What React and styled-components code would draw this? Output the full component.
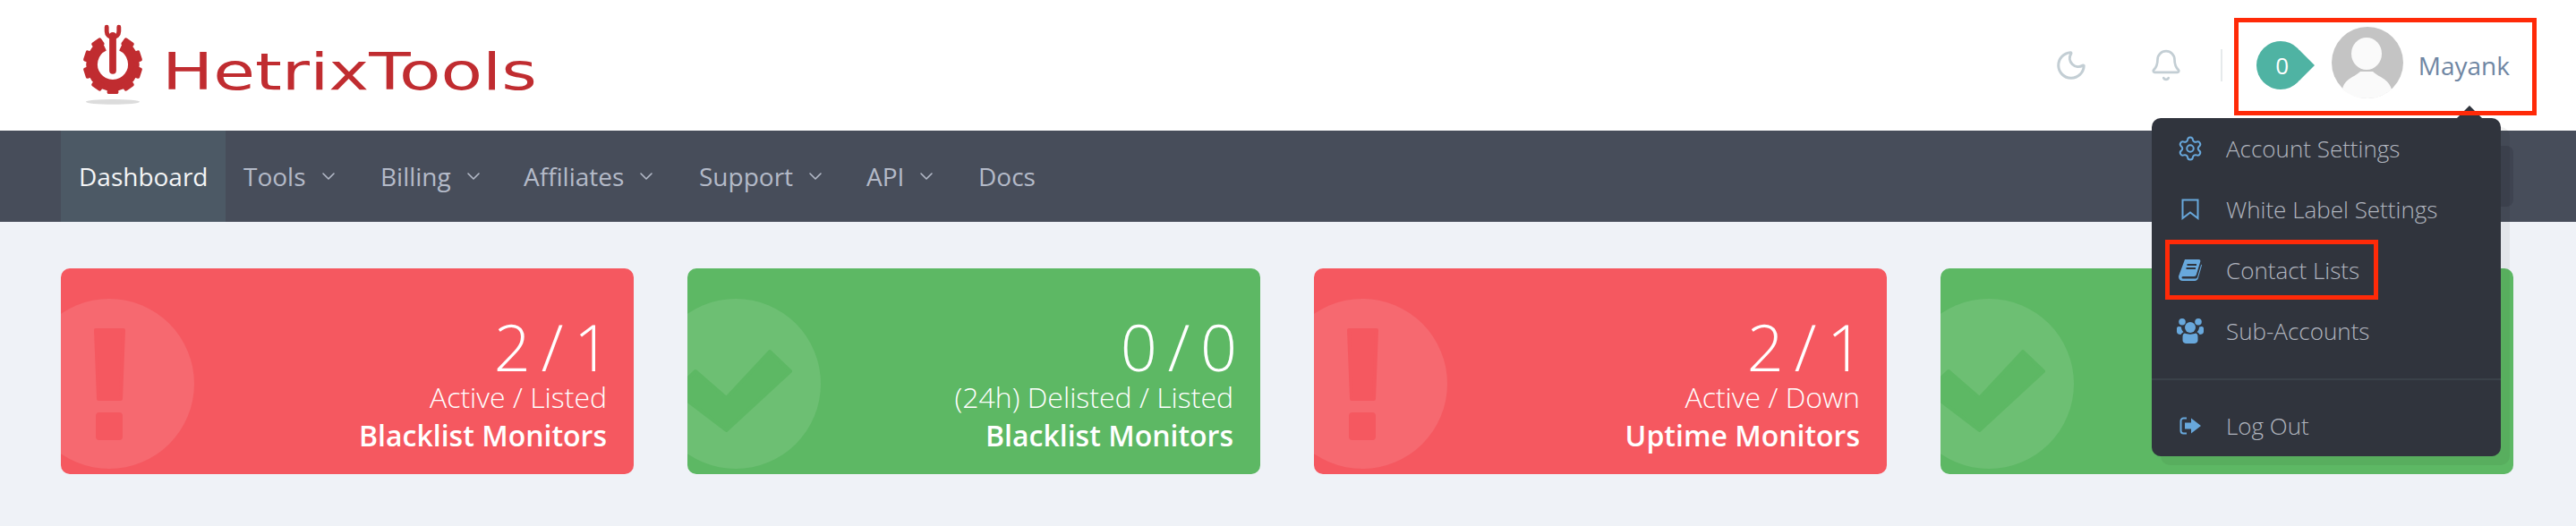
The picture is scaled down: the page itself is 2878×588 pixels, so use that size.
import styled, { createGlobalStyle } from "styled-components";
import { Moon, Bell, Settings, ChevronDown } from "lucide-react";

const Colors = {
  Page: "#eff2f7",
  Nav: "#474d5a",
  NavActive: "#4c5965",
  Menu: "#30343d",
  Red: "#f55860",
  Green: "#5db864",
  Teal: "#4fb3a3",
  Accent: "#68a8dc",
  Brand: "#c02c30",
  Annotation: "#ff2a08",
};

const GlobalStyle = createGlobalStyle`
  body {
    margin: 0;
    background: ${Colors.Page};
    font-family: "Open Sans", "Liberation Sans", sans-serif;
  }
`;

const Page = styled.div`
  position: relative;
  width: 2878px;
  height: 588px;
  overflow: hidden;
`;

const Header = styled.header`
  position: relative;
  z-index: 2;
  height: 146px;
  background: #fff;
  display: flex;
  align-items: center;
  justify-content: space-between;
  padding: 0 74px 0 90px;
  box-sizing: border-box;
`;

const Logo = styled.div`
  display: flex;
  align-items: flex-start;
  height: 100px;
  margin-top: 4px;
  filter: blur(0.5px);
`;

const LogoText = styled.span`
  display: inline-block;
  margin: 22px 0 0 19px;
  font-family: "DejaVu Sans", sans-serif;
  font-size: 57px;
  line-height: 66px;
  font-weight: 400;
  color: ${Colors.Brand};
  transform: scaleX(1.335);
  transform-origin: left center;
`;

const HeaderRight = styled.div`
  display: flex;
  align-items: center;
`;

const HeaderIcon = styled.span`
  display: flex;
  color: #c3ced4;
  margin-right: ${(props) => props.$gap}px;
`;

const Divider = styled.span`
  width: 2px;
  height: 36px;
  background: #e6eaec;
  margin-right: 38px;
`;

const Badge = styled.span`
  position: relative;
  width: 54px;
  height: 54px;
  border-radius: 50%;
  background: ${Colors.Teal};
  color: #fff;
  font-size: 26px;
  line-height: 54px;
  text-align: center;
  margin-right: 30px;
  &::after {
    content: "";
    position: absolute;
    top: 15px;
    right: -6px;
    width: 24px;
    height: 24px;
    background: ${Colors.Teal};
    transform: rotate(45deg);
  }
  & > span {
    position: relative;
    z-index: 1;
    left: 2px;
  }
`;

const Avatar = styled.svg`
  display: block;
  width: 80px;
  height: 80px;
  margin: -6px 17px 0 0;
`;

const UserName = styled.span`
  font-size: 28px;
  color: #6f86a3;
  line-height: 38px;
`;

const NavBar = styled.nav`
  height: 102px;
  background: ${Colors.Nav};
  display: flex;
  align-items: stretch;
  padding: 0 70px 0 68px;
  box-sizing: border-box;
`;

const NavItem = styled.a`
  display: flex;
  align-items: center;
  width: ${(props) => props.$width}px;
  box-sizing: border-box;
  padding: 0 20px;
  font-size: 28px;
  color: ${(props) => (props.$active ? "#f4f5f6" : "#b4bac8")};
  background: ${(props) => (props.$active ? Colors.NavActive : "transparent")};
  svg {
    margin-left: 13px;
    flex: none;
  }
`;

const NavSearch = styled.div`
  width: 320px;
  height: 68px;
  align-self: center;
  margin-left: auto;
  border-radius: 8px;
  background: #3f4451;
`;

const CardGrid = styled.main`
  display: grid;
  grid-template-columns: repeat(4, 640px);
  gap: 60px;
  padding: 52px 0 0 68px;
`;

const Card = styled.section`
  position: relative;
  height: 230px;
  border-radius: 10px;
  overflow: hidden;
  background: ${(props) => props.$color};
  color: #fff;
  text-align: right;
  padding: 49px 30px 0 0;
  box-sizing: border-box;
`;

const CardEmblem = styled.svg`
  position: absolute;
  left: -41px;
  top: 34px;
  width: 190px;
  height: 190px;
`;

const CardValue = styled.div`
  font-size: 72px;
  font-weight: 300;
  line-height: 76px;
  word-spacing: -7px;
  margin-right: -4px;
`;

const CardLabel = styled.div`
  font-size: 32px;
  font-weight: 300;
  line-height: 42px;
  margin-top: -2px;
`;

const CardTitle = styled.div`
  font-size: 32px;
  font-weight: 600;
  line-height: 44px;
`;

const Dropdown = styled.div`
  position: absolute;
  z-index: 3;
  top: 132px;
  right: 84px;
  width: 390px;
  height: 378px;
  border-radius: 10px;
  background: ${Colors.Menu};
  box-shadow: 10px 10px 0 rgba(0, 0, 0, 0.05);
  &::before {
    content: "";
    position: absolute;
    top: -14px;
    right: 21px;
    border: solid transparent;
    border-width: 0 14px 14px;
    border-bottom-color: ${Colors.Menu};
  }
`;

const MenuRow = styled.a`
  display: flex;
  align-items: center;
  height: 68px;
  padding-left: 23px;
  font-size: 26px;
  font-weight: 300;
  color: #b0b5bf;
`;

const MenuIcon = styled.span`
  display: flex;
  align-items: center;
  justify-content: center;
  width: 40px;
  margin-right: 20px;
  color: ${Colors.Accent};
`;

const MenuDivider = styled.div`
  height: 2px;
  background: #3a4149;
  margin: 19px 0 17px;
`;

const AnnotationBox = styled.div`
  position: absolute;
  z-index: 5;
  left: ${(props) => props.$left}px;
  top: ${(props) => props.$top}px;
  width: ${(props) => props.$width}px;
  height: ${(props) => props.$height}px;
  box-sizing: border-box;
  border: 5px solid ${Colors.Annotation};
`;

function LogoMark() {
  const teeth = [36, 72, 108, 144, 180, 216, 252, 288, 324];
  return (
    <svg width="72" height="96" viewBox="0 0 74 96" fill="none">
      <ellipse cx="37" cy="90" rx="31" ry="3" fill="#dcdcdc" />
      <path d="M47.1 25.2A24 24 0 1 1 26.9 25.2" stroke={Colors.Brand} strokeWidth="13" />
      {teeth.map((angle) => (
        <rect key={angle} x="30.5" y="13" width="13" height="10" rx="2" fill={Colors.Brand} transform={`rotate(${angle} 37 47)`} />
      ))}
      <path d="M37 14V54" stroke={Colors.Brand} strokeWidth="8" strokeLinecap="round" />
      <path d="M30 4V9A7 7 0 0 0 44 9V4" stroke={Colors.Brand} strokeWidth="5" strokeLinecap="round" />
    </svg>
  );
}

function DangerEmblem({ color }) {
  return (
    <CardEmblem viewBox="0 0 190 190">
      <circle cx="95" cy="95" r="95" fill="#fff" fillOpacity="0.1" />
      <path d="M80 35H111L108 112H83Z" fill={color} stroke={color} strokeWidth="4" strokeLinejoin="round" />
      <rect x="80" y="127" width="30" height="31" rx="4" fill={color} />
    </CardEmblem>
  );
}

function OkEmblem({ color }) {
  return (
    <CardEmblem viewBox="0 0 190 190">
      <circle cx="95" cy="95" r="95" fill="#fff" fillOpacity="0.1" />
      <path d="M50 81L84.5 111L133 59L156 81L84.5 147L27 103Z" fill={color} stroke={color} strokeWidth="4" strokeLinejoin="round" />
    </CardEmblem>
  );
}

function BookIcon() {
  return (
    <svg width="26" height="24" viewBox="0 0 26 24" fill="currentColor">
      <path d="M7 0H22.5C24 0 24.7 1.2 24.3 2.5L19.8 17C19.4 18.2 18.8 19 17 19H5C3.5 19 3 20.5 4 21.2C4.3 21.5 5 21.6 5.5 21.6H18.5C19.8 21.6 20.8 21 21.2 19.6L25.2 5.5L26 6.5L22 20.5C21.5 22.7 20 24 18 24H4.5C2 24 0 22 0 19.5C0 19 .1 18.5 .3 18Z" />
      <path d="M9.5 6H20M8.5 10H19" stroke={Colors.Menu} strokeWidth="2" />
    </svg>
  );
}

function UsersIcon() {
  return (
    <svg width="30" height="28" viewBox="0 0 30 28" fill="currentColor">
      <circle cx="6" cy="3.8" r="3.8" />
      <circle cx="24" cy="3.8" r="3.8" />
      <path d="M2 9C3.5 9 4 9.5 5 9.6C5 12 6 14 7.5 15.3C6 16 5 17 4.5 18C2 18 0 17 0 15V11C0 10 .8 9 2 9Z" />
      <path d="M28 9C26.5 9 26 9.5 25 9.6C25 12 24 14 22.5 15.3C24 16 25 17 25.5 18C28 18 30 17 30 15V11C30 10 29.2 9 28 9Z" />
      <circle cx="15" cy="10" r="6" />
      <path d="M9 16.5C11 18 19 18 21 16.5C23 17 23.5 18.5 23.5 21V24.5C23.5 26.8 21.5 28 19.5 28H10.5C8.5 28 6.5 26.8 6.5 24.5V21C6.5 18.5 7 17 9 16.5Z" />
    </svg>
  );
}

function LogoutIcon() {
  return (
    <svg width="24" height="20" viewBox="0 0 24 20" fill="none">
      <path d="M8 1.5H4.5A3 3 0 0 0 1.5 4.5V15.5A3 3 0 0 0 4.5 18.5H8" stroke="currentColor" strokeWidth="2" />
      <path d="M6 6.5H13V1.5L24 10L13 18.5V13.5H6Z" fill="currentColor" />
    </svg>
  );
}

const navItems = [
  { label: "Dashboard", width: 184, active: true },
  { label: "Tools", width: 153, caret: true },
  { label: "Billing", width: 160, caret: true },
  { label: "Affiliates", width: 196, caret: true },
  { label: "Support", width: 187, caret: true },
  { label: "API", width: 125, caret: true },
  { label: "Docs", width: 120 },
];

const cards = [
  { value: "2 / 1", label: "Active / Listed", title: "Blacklist Monitors", ok: false },
  { value: "0 / 0", label: "(24h) Delisted / Listed", title: "Blacklist Monitors", ok: true },
  { value: "2 / 1", label: "Active / Down", title: "Uptime Monitors", ok: false },
  { value: "0 / 0", label: "Active / Down", title: "Uptime Monitors", ok: true },
];

export default function App() {
  return (
    <Page>
      <GlobalStyle />
      <Header>
        <Logo>
          <LogoMark />
          <LogoText>HetrixTools</LogoText>
        </Logo>
        <HeaderRight>
          <HeaderIcon $gap={68}>
            <Moon size={38} strokeWidth={1.9} />
          </HeaderIcon>
          <HeaderIcon $gap={42}>
            <Bell size={38} strokeWidth={1.7} />
          </HeaderIcon>
          <Divider />
          <Badge>
            <span>0</span>
          </Badge>
          <Avatar viewBox="0 0 80 80">
            <circle cx="40" cy="40" r="40" fill="#c4c4c4" />
            <ellipse cx="39" cy="30" rx="17" ry="18" fill="#fafafa" />
            <path d="M12 70C14 58 26 56 32 50H46C52 56 64 58 67 70C58 77 50 80 40 80C30 80 20 77 12 70Z" fill="#fafafa" />
          </Avatar>
          <UserName>Mayank</UserName>
        </HeaderRight>
        <Dropdown>
          <MenuRow>
            <MenuIcon>
              <Settings size={30} strokeWidth={1.6} />
            </MenuIcon>
            Account Settings
          </MenuRow>
          <MenuRow>
            <MenuIcon>
              <svg width="20" height="24" viewBox="0 0 20 24" fill="none">
                <path d="M1.5 1.5H18.5V22L10 15.5L1.5 22Z" stroke="currentColor" strokeWidth="2" />
              </svg>
            </MenuIcon>
            White Label Settings
          </MenuRow>
          <MenuRow>
            <MenuIcon>
              <BookIcon />
            </MenuIcon>
            Contact Lists
          </MenuRow>
          <MenuRow>
            <MenuIcon>
              <UsersIcon />
            </MenuIcon>
            Sub-Accounts
          </MenuRow>
          <MenuDivider />
          <MenuRow>
            <MenuIcon>
              <LogoutIcon />
            </MenuIcon>
            Log Out
          </MenuRow>
        </Dropdown>
      </Header>
      <NavBar>
        {navItems.map(({ label, width, active, caret }) => (
          <NavItem key={label} $width={width} $active={active}>
            {label}
            {caret && <ChevronDown size={24} strokeWidth={1.6} />}
          </NavItem>
        ))}
        <NavSearch />
      </NavBar>
      <CardGrid>
        {cards.map(({ value, label, title, ok }, i) => (
          <Card key={i} $color={ok ? Colors.Green : Colors.Red}>
            {ok ? <OkEmblem color={Colors.Green} /> : <DangerEmblem color={Colors.Red} />}
            <CardValue>{value}</CardValue>
            <CardLabel>{label}</CardLabel>
            <CardTitle>{title}</CardTitle>
          </Card>
        ))}
      </CardGrid>
      <AnnotationBox $left={2496} $top={20} $width={338} $height={109} />
      <AnnotationBox $left={2419} $top={268} $width={238} $height={67} />
    </Page>
  );
}
